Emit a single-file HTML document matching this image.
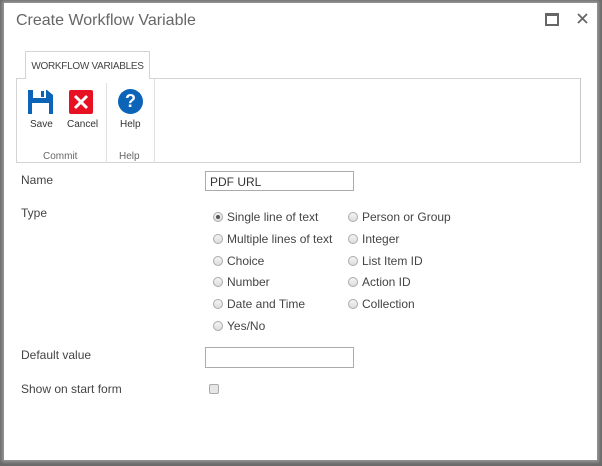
<!DOCTYPE html>
<html><head><style>
html,body{margin:0;padding:0;}
body{width:602px;height:466px;background:#6a6a6a;position:relative;overflow:hidden;font-family:"Liberation Sans",sans-serif;color:#444;}
.dlg{position:absolute;left:4px;top:3px;width:593px;height:457px;background:#fff;box-shadow:0 0 3px 2px #999;}
.abs{position:absolute;}
.t{font-size:11px;color:#333;}
.r{position:absolute;width:10px;height:10px;border-radius:50%;border:1px solid #aaa;background:linear-gradient(#f4f4f4,#ddd);box-sizing:border-box;}
.lbl{position:absolute;font-size:12px;color:#444;}
</style></head><body>
<div class="dlg"></div>
<div class="abs" style="left:16px;top:12px;font-size:16px;color:#666;">Create Workflow Variable</div>
<div class="abs" style="left:545px;top:13px;width:10px;height:8px;border:2px solid #666;border-top-width:3px;"></div>
<svg class="abs" style="left:577px;top:13px" width="11" height="11"><path d="M1 1L10 10M10 1L1 10" stroke="#666" stroke-width="1.8"/></svg>
<div class="abs" style="left:16px;top:78px;width:565px;height:85px;border:1px solid #d4d4d4;border-right-color:#c6c6c6;box-sizing:border-box;"></div>
<div class="abs" style="left:25px;top:51px;width:125px;height:28px;border:1px solid #d4d4d4;border-bottom:none;background:#fff;box-sizing:border-box;font-size:10px;color:#444;text-align:center;line-height:29px;letter-spacing:-0.3px;">WORKFLOW VARIABLES</div>
<div class="abs" style="left:106px;top:83px;width:1px;height:80px;background:#e0e0e0;"></div>
<div class="abs" style="left:154px;top:79px;width:1px;height:84px;background:#e0e0e0;"></div>
<svg class="abs" style="left:28px;top:90px" width="25" height="24"><path d="M0 0H19L25 5V24H0Z" fill="#0b64b8"/><rect x="5" y="0" width="13" height="8" fill="#fff"/><rect x="13" y="1" width="3" height="6" fill="#0b64b8"/><rect x="4" y="13" width="17" height="11" fill="#fff"/></svg>
<div class="abs" style="left:69px;top:90px;width:24px;height:24px;background:#e81123;border-radius:2px;"></div>
<svg class="abs" style="left:69px;top:90px" width="24" height="24"><path d="M6 6L18 18M18 6L6 18" stroke="#fff" stroke-width="3"/></svg>
<div class="abs" style="left:118px;top:89px;width:25px;height:25px;border-radius:50%;background:#0b64b8;color:#fff;font-weight:bold;font-size:18px;text-align:center;line-height:25px;">?</div>
<div class="abs t" style="left:30px;top:119px;font-size:10px;">Save</div>
<div class="abs t" style="left:67px;top:119px;font-size:10px;">Cancel</div>
<div class="abs t" style="left:120px;top:119px;font-size:10px;">Help</div>
<div class="abs" style="left:43px;top:151px;font-size:10px;color:#666;">Commit</div>
<div class="abs" style="left:119px;top:151px;font-size:10px;color:#666;">Help</div>
<div class="lbl" style="left:21px;top:173px;">Name</div>
<div class="abs" style="left:205px;top:171px;width:149px;height:20px;border:1px solid #ababab;box-sizing:border-box;font-size:12px;color:#333;padding:3px 0 0 4px;">PDF URL</div>
<div class="lbl" style="left:21px;top:206px;">Type</div>
<div class="r" style="left:213px;top:212px;"></div><div class="abs" style="left:216px;top:215px;width:4px;height:4px;border-radius:50%;background:#555;"></div>
<div class="r" style="left:213px;top:234px;"></div>
<div class="r" style="left:213px;top:256px;"></div>
<div class="r" style="left:213px;top:277px;"></div>
<div class="r" style="left:213px;top:299px;"></div>
<div class="r" style="left:213px;top:321px;"></div>
<div class="r" style="left:348px;top:212px;"></div>
<div class="r" style="left:348px;top:234px;"></div>
<div class="r" style="left:348px;top:256px;"></div>
<div class="r" style="left:348px;top:277px;"></div>
<div class="r" style="left:348px;top:299px;"></div>
<div class="lbl" style="left:227px;top:210px;">Single line of text</div>
<div class="lbl" style="left:227px;top:232px;">Multiple lines of text</div>
<div class="lbl" style="left:227px;top:254px;">Choice</div>
<div class="lbl" style="left:227px;top:275px;">Number</div>
<div class="lbl" style="left:227px;top:297px;">Date and Time</div>
<div class="lbl" style="left:227px;top:319px;">Yes/No</div>
<div class="lbl" style="left:362px;top:210px;">Person or Group</div>
<div class="lbl" style="left:362px;top:232px;">Integer</div>
<div class="lbl" style="left:362px;top:254px;">List Item ID</div>
<div class="lbl" style="left:362px;top:275px;">Action ID</div>
<div class="lbl" style="left:362px;top:297px;">Collection</div>
<div class="lbl" style="left:21px;top:348px;">Default value</div>
<div class="abs" style="left:205px;top:347px;width:149px;height:21px;border:1px solid #ababab;box-sizing:border-box;"></div>
<div class="lbl" style="left:21px;top:382px;">Show on start form</div>
<div class="abs" style="left:209px;top:384px;width:10px;height:10px;border:1px solid #aaa;border-radius:2px;background:#e6e6e6;box-sizing:border-box;"></div>
</body></html>
